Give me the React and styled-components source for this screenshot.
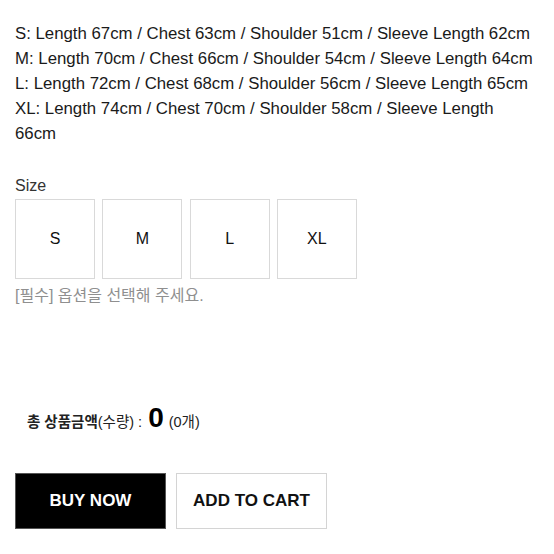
import React from "react";
import styled, { createGlobalStyle } from "styled-components";

const Global = createGlobalStyle`
  html, body { margin: 0; padding: 0; background: #fff; }
  body { font-family: "Liberation Sans", Arial, "Noto Sans CJK KR", sans-serif; color: #111; }
`;

const Page = styled.div`
  padding: 21px 15px 0 15px;
  width: 554px;
  box-sizing: border-box;
`;

const Specs = styled.div`
  font-size: 16.8px;
  line-height: 25px;
  color: #1a1a1a;
`;

const SizeLabel = styled.div`
  margin-top: 30px;
  font-size: 16px;
  line-height: 20px;
  color: #333;
`;

const Options = styled.div`
  display: flex;
  gap: 7.3px;
  margin-top: 3px;
`;

const OptionBox = styled.button`
  width: 80px;
  height: 80px;
  box-sizing: border-box;
  border: 1px solid #d9d9d9;
  background: #fff;
  font-family: "Liberation Sans", Arial, sans-serif;
  font-size: 16px;
  color: #111;
  padding: 0;
  display: flex;
  align-items: center;
  justify-content: center;
`;

const Notice = styled.div`
  margin-top: 7px;
  font-size: 16px;
  line-height: 20px;
  color: #8f8f8f;
`;

const Total = styled.div`
  margin-top: 96px;
  padding-left: 12px;
  display: flex;
  align-items: baseline;
  font-size: 14.5px;
  color: #222;
  height: 30px;
`;

const TotalLabel = styled.span`
  font-weight: bold;
`;

const TotalQtyLabel = styled.span`
  margin-right: 6px;
`;

const Amount = styled.strong`
  font-size: 28px;
  font-weight: bold;
  color: #000;
  margin-right: 5px;
`;

const Buttons = styled.div`
  display: flex;
  gap: 10px;
  margin-top: 41px;
`;

const ActionButton = styled.button`
  width: 151px;
  height: 56px;
  box-sizing: border-box;
  border: 1px solid ${(p) => (p.$primary ? "#555" : "#d4d4d4")};
  background: ${(p) => (p.$primary ? "#000" : "#fff")};
  color: ${(p) => (p.$primary ? "#fff" : "#111")};
  font-family: "Liberation Sans", Arial, sans-serif;
  font-weight: bold;
  font-size: 17px;
  padding: 0;
`;

const specs = [
  "S: Length 67cm / Chest 63cm / Shoulder 51cm / Sleeve Length 62cm",
  "M: Length 70cm / Chest 66cm / Shoulder 54cm / Sleeve Length 64cm",
  "L: Length 72cm / Chest 68cm / Shoulder 56cm / Sleeve Length 65cm",
  "XL: Length 74cm / Chest 70cm / Shoulder 58cm / Sleeve Length 66cm",
];

export default function App() {
  return (
    <>
      <Global />
      <Page>
        <Specs>
          {specs.map((s) => (
            <div key={s}>{s}</div>
          ))}
        </Specs>
        <SizeLabel>Size</SizeLabel>
        <Options>
          {["S", "M", "L", "XL"].map((s) => (
            <OptionBox key={s}>{s}</OptionBox>
          ))}
        </Options>
        <Notice>[필수] 옵션을 선택해 주세요.</Notice>
        <Total>
          <TotalLabel>총 상품금액</TotalLabel>
          <TotalQtyLabel>(수량) :</TotalQtyLabel>
          <Amount>0</Amount>
          <span>(0개)</span>
        </Total>
        <Buttons>
          <ActionButton $primary>BUY NOW</ActionButton>
          <ActionButton>ADD TO CART</ActionButton>
        </Buttons>
      </Page>
    </>
  );
}
